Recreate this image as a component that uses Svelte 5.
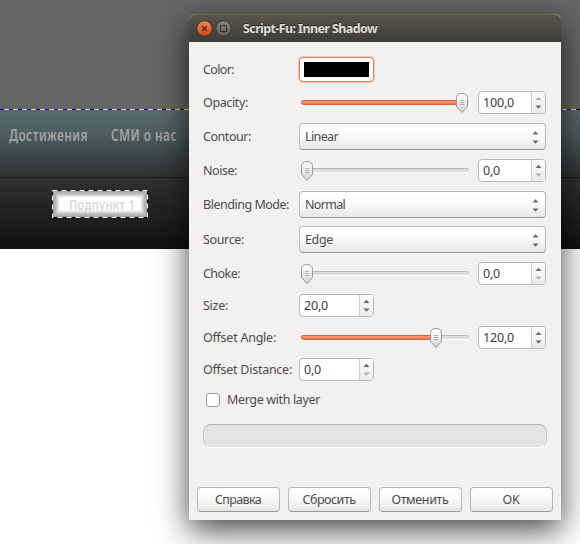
<script>
  const rows = [
    { label: 'Color:', w: 31, type: 'color' },
    { label: 'Opacity:', w: 45, type: 'slider', value: '100,0', vw: 31, pos: 155, fill: true, upOff: true },
    { label: 'Contour:', w: 48, type: 'combo', value: 'Linear', vw: 33 },
    { label: 'Noise:', w: 34, type: 'slider', value: '0,0', vw: 17, pos: 0, downOff: true },
    { label: 'Blending Mode:', w: 86, type: 'combo', value: 'Normal', vw: 40 },
    { label: 'Source:', w: 41, type: 'combo', value: 'Edge', vw: 28, tight: true },
    { label: 'Choke:', w: 37, type: 'slider', value: '0,0', vw: 17, pos: 0, downOff: true },
    { label: 'Size:', w: 25, type: 'spin', value: '20,0', vw: 24 },
    { label: 'Offset Angle:', w: 73, type: 'slider', value: '120,0', vw: 31, pos: 129, fill: true },
    { label: 'Offset Distance:', w: 89, type: 'spin', value: '0,0', vw: 17, downOff: true }
  ];
  const buttons = [
    { t: 'Справка', w: 46 },
    { t: 'Сбросить', w: 53 },
    { t: 'Отменить', w: 57 },
    { t: 'OK', w: 17 }
  ];

  // Spreads the letters so that a label takes the given width.
  function fit(node, width) {
    const drawn = node.getBoundingClientRect().width;
    const scale = node.closest('.narrow') ? 0.74 : 1;
    node.style.letterSpacing = `${(width - drawn) / scale / node.textContent.length}px`;
  }
</script>

{#snippet spin(r)}
  <div class="spin">
    <span class="num"><span class="t" use:fit={r.vw}>{r.value}</span></span>
    <span class="steps">
      <svg width="13" height="21" viewBox="0 0 13 21">
        <path d="M3.5 8 L6.5 4.8 L9.5 8z" fill={r.upOff ? '#b4b2b0' : '#6a6866'} />
        <path d="M3.5 13.5 L6.5 16.7 L9.5 13.5z" fill={r.downOff ? '#b4b2b0' : '#6a6866'} />
      </svg>
    </span>
  </div>
{/snippet}

<div class="desktop">
  <div class="canvas-top"></div>
  <div class="menu">
    <div class="narrow first"><span class="t" use:fit={79}>Достижения</span></div>
    <div class="narrow"><span class="t" use:fit={66}>СМИ о нас</span></div>
  </div>
  <div class="submenu">
    <div class="item narrow">
      <span class="t" use:fit={66}>Подпункт 1</span>
      <svg class="ants" width="96" height="28">
        <rect x=".5" y=".5" width="95" height="27" fill="none" stroke="#000" />
        <rect x=".5" y=".5" width="95" height="27" fill="none" stroke="#fff" stroke-dasharray="5 4" />
      </svg>
    </div>
  </div>

  <div class="dialog">
    <div class="title">
      <svg width="40" height="20" viewBox="0 0 40 20">
        <defs>
          <linearGradient id="close" x1="0" y1="0" x2="0" y2="1">
            <stop offset="0" stop-color="#f5885f" /><stop offset="1" stop-color="#dc4514" />
          </linearGradient>
          <linearGradient id="max" x1="0" y1="0" x2="0" y2="1">
            <stop offset="0" stop-color="#8a877d" /><stop offset="1" stop-color="#625f57" />
          </linearGradient>
        </defs>
        <circle cx="9.5" cy="9.5" r="7.7" fill="url(#close)" stroke="#34332d" />
        <path d="M7 7l5 5M12 7l-5 5" stroke="#4b2416" stroke-width="1.3" />
        <circle cx="28.5" cy="9.5" r="7.7" fill="url(#max)" stroke="#34332d" />
        <rect x="25.5" y="6.5" width="6" height="6" fill="none" stroke="#35342f" />
      </svg>
      <span class="t" use:fit={134}>Script-Fu: Inner Shadow</span>
    </div>

    <div class="form">
      {#each rows as r}
        <div class="row {r.type}" class:tight={r.tight}>
          <span class="label"><span class="t" use:fit={r.w}>{r.label}</span></span>
          {#if r.type === 'color'}
            <div class="swatch"><i></i></div>
          {:else if r.type === 'combo'}
            <div class="select">
              <span class="t" use:fit={r.vw}>{r.value}</span>
              <svg width="7" height="13" viewBox="0 0 7 13">
                <path d="M.5 3.5 L3.5 .3 L6.5 3.5z M.5 9.5 L3.5 12.7 L6.5 9.5z" fill="#6a6866" />
              </svg>
            </div>
          {:else if r.type === 'slider'}
            <div class="track">
              <div class="trough"></div>
              {#if r.fill}<div class="fill" style="width: {r.pos + 5}px"></div>{/if}
              <svg class="thumb" style="left: {r.pos}px" width="12" height="21" viewBox="0 0 12 21">
                <defs>
                  <linearGradient id="thumb" x1="0" y1="0" x2="0" y2="1">
                    <stop offset="0" stop-color="#fff" /><stop offset="1" stop-color="#d4d2d0" />
                  </linearGradient>
                </defs>
                <path d="M.5 5.5Q.5 .5 6 .5Q11.5 .5 11.5 5.5V13.5L6 19.5L.5 13.5Z" fill="url(#thumb)" stroke="#9b9894" />
                <path d="M4 7.5h4M4 9.5h4M4 11.5h4" stroke="#b5b2ae" />
              </svg>
            </div>
            {@render spin(r)}
          {:else}
            {@render spin(r)}
          {/if}
        </div>
      {/each}
      <div class="check"><i></i><span class="t" use:fit={93}>Merge with layer</span></div>
      <div class="progress"></div>
    </div>

    <div class="actions">
      {#each buttons as b}
        <button><span class="t" use:fit={b.w}>{b.t}</span></button>
      {/each}
    </div>
  </div>
</div>

<style>
  .desktop {
    position: relative;
    width: 580px;
    height: 544px;
    overflow: hidden;
    background: #fff;
    font-family: 'Noto Sans', sans-serif;
    font-size: 12.5px;
    color: #4c4c4c;
  }
  .t { display: inline-block; white-space: pre; }
  .canvas-top { height: 109px; background: #666; }
  .menu {
    box-sizing: border-box;
    height: 69px;
    display: flex;
    padding: 16px 0 0 9px;
    background:
      repeating-linear-gradient(90deg, #000 0 4px, #f0ee30 4px 9px) 0 0 / 100% 1px no-repeat,
      linear-gradient(#596a6f 0, #4d5d61 26px, #3a4447 48px, #303232 68px);
    border-bottom: 1px solid #1b1d1d;
    font: 600 16px/20px 'Noto Sans', sans-serif;
    color: #a3a3a3;
  }
  .first { width: 102px; }
  .narrow .t { transform: scaleX(0.74); transform-origin: 0 50%; }
  .submenu {
    box-sizing: border-box;
    height: 71px;
    padding: 12px 0 0 52px;
    background: linear-gradient(#303030, #111);
  }
  .item {
    position: relative;
    box-sizing: border-box;
    width: 96px;
    height: 28px;
    padding-left: 17px;
    background: #fff;
    box-shadow:
      inset 0 0 0 2px #a2a2a2,
      inset 0 0 0 4px #b4b4b4,
      inset 0 0 0 5px #c6c6c6,
      inset 0 0 0 6px #d6d6d6,
      inset 0 0 0 7px #e6e6e6,
      inset 0 0 0 8px #f6f6f6;
    font: 600 15px/28px 'Noto Sans', sans-serif;
    color: #dadada;
  }
  .ants { position: absolute; left: 0; top: 0; }

  .dialog {
    position: absolute;
    left: 189px;
    top: 14px;
    width: 372px;
    height: 506px;
    display: flex;
    flex-direction: column;
    background: #f2f1f0;
    border-radius: 7px 7px 0 0;
    box-shadow: 0 10px 32px rgba(0, 0, 0, 0.74);
  }
  .title {
    box-sizing: border-box;
    height: 28px;
    display: flex;
    align-items: center;
    gap: 8px;
    padding-left: 6px;
    border-top: 1px solid #68654f;
    border-radius: 7px 7px 0 0;
    background: linear-gradient(#57544a, #3d3c37);
    color: #dfdbd2;
    font-weight: 700;
    font-size: 12.5px;
    text-shadow: 0 -1px #2b2a26;
  }
  .form { display: flex; flex-direction: column; gap: 9px; padding: 15px 14px 0; }
  .row { display: flex; align-items: center; height: 23px; }
  .row.color { height: 25px; }
  .row.combo { height: 27px; }
  .tight { margin-top: -1px; }
  .label { width: 96px; flex: none; }
  .swatch {
    box-sizing: border-box;
    width: 75px;
    height: 25px;
    padding: 4px;
    background: #fff;
    border: 1px solid #df7e5a;
    border-radius: 4px;
    box-shadow: 0 0 0 1px #f3cbbb;
    display: flex;
  }
  .swatch i { flex: 1; background: #000; }
  .select, button {
    box-sizing: border-box;
    border: 1px solid #bab7b3;
    border-bottom-color: #9c9995;
    border-radius: 4px;
    background: linear-gradient(#fff, #fafafa 45%, #e8e7e6);
  }
  .select {
    flex: 1;
    height: 27px;
    margin-right: 1px;
    padding: 0 6px 0 5px;
    display: flex;
    align-items: center;
    justify-content: space-between;
  }
  .select svg { margin-top: 1px; }
  .track { position: relative; width: 168px; margin: 0 9px 0 2px; }
  .trough {
    height: 3px;
    border: solid #bbb8b4;
    border-width: 1px 0 0 1px;
    border-bottom: 1px solid #fff;
    border-radius: 3px;
    background: #e0dedc;
  }
  .fill {
    position: absolute;
    left: 0;
    top: 0;
    box-sizing: border-box;
    height: 5px;
    border: 1px solid #d2603a;
    border-radius: 3px;
    background: linear-gradient(#ff9a70, #f07746);
  }
  .thumb { position: absolute; top: -7px; }
  .spin {
    box-sizing: border-box;
    width: 68px;
    height: 23px;
    display: flex;
    border: 1px solid #bbb8b5;
    border-radius: 4px;
    background: #fff;
    overflow: hidden;
  }
  .row.spin {
    width: auto;
    border: 0;
    background: none;
    overflow: visible;
  }
  .row.spin > .spin { width: 75px; }
  .num { flex: 1; padding-left: 4px; line-height: 21px; color: #3c3c3c; }
  .steps {
    width: 13px;
    border-left: 1px solid #d0cecb;
    background: linear-gradient(#fcfcfc, #ebeae9);
  }
  .steps svg { display: block; }
  .check {
    display: flex;
    align-items: center;
    gap: 7px;
    height: 14px;
    margin: 3px 0 0 3px;
  }
  .check .t { margin-top: -2px; }
  .check i {
    box-sizing: border-box;
    width: 14px;
    height: 14px;
    border: 1px solid #9d9a96;
    border-radius: 3px;
    background: #fff;
  }
  .progress {
    box-sizing: border-box;
    height: 24px;
    margin-top: 8px;
    border: 1px solid #cdcbc8;
    border-top-color: #b4b2af;
    border-bottom-color: #fff;
    border-radius: 8px;
    background: #e4e3e1;
  }
  .actions { display: flex; gap: 8px; margin: auto 8px 8px; }
  button {
    width: 83px;
    height: 25px;
    padding: 0 1px 0 0;
    font: inherit;
    color: inherit;
  }
</style>
